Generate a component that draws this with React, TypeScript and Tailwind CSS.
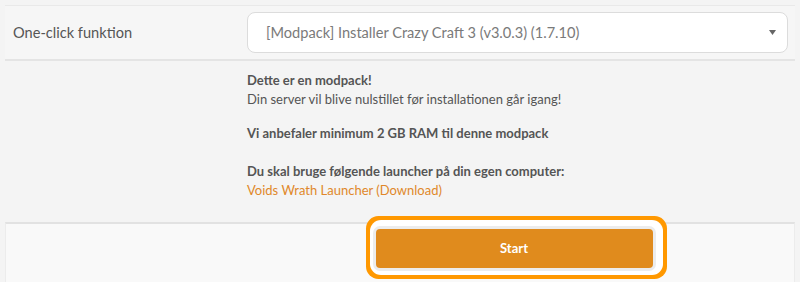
import React from 'react';

const font = { fontFamily: 'Lato, "Open Sans", sans-serif' };

export default function App() {
  return (
    <div className="min-h-[282px] bg-[#f4f4f4] px-[5px] pt-[5px] text-[#555]" style={font}>
      {/* One-click row */}
      <div className="flex h-[56px] items-center border-t border-b-2 border-t-[#e9e9e9] border-b-[#e4e4e4] bg-[#f6f6f6]">
        <div className="w-[242px] pl-[8px] text-[14.6px] text-[#555]">One-click funktion</div>
        <div className="flex-1 pr-[7px]">
          <div className="relative flex h-[41px] items-center rounded-[8px] border border-[#dcdcdc] bg-white pl-[18px] text-[14.6px] text-[#7a7a7a]">
            [Modpack] Installer Crazy Craft 3 (v3.0.3) (1.7.10)
            <svg className="absolute right-[11px] top-[17px]" width="7" height="5" viewBox="0 0 7 5">
              <path d="M0 0h7L3.5 5z" fill="#666" />
            </svg>
          </div>
        </div>
      </div>

      {/* Modpack info */}
      <div className="pl-[242px] pt-[10px] pb-[22px] text-[13px] leading-[19px] text-[#555]">
        <p className="font-bold">Dette er en modpack!</p>
        <p>Din server vil blive nulstillet før installationen går igang!</p>
        <p className="mt-[15px] font-bold">Vi anbefaler minimum 2 GB RAM til denne modpack</p>
        <p className="mt-[19px] font-bold">Du skal bruge følgende launcher på din egen computer:</p>
        <a href="#" className="text-[#e0882a]">Voids Wrath Launcher (Download)</a>
      </div>

      {/* Actions */}
      <div className="flex h-[62px] border-t-2 border-x border-t-[#e2e2e2] border-x-[#ececec] bg-[#f9f9f9] pl-[241px] pr-[13px] pt-[5px]">
        <div className="flex flex-1 justify-center">
          <button className="h-[39px] w-[277px] rounded-[4px] bg-[#e08b1d] text-[13px] font-bold text-white shadow-[0_0_0_3px_#ececec,2px_-1px_0_8px_#fff,2px_-1px_0_12px_#ff9800]">
            Start
          </button>
        </div>
      </div>
    </div>
  );
}
